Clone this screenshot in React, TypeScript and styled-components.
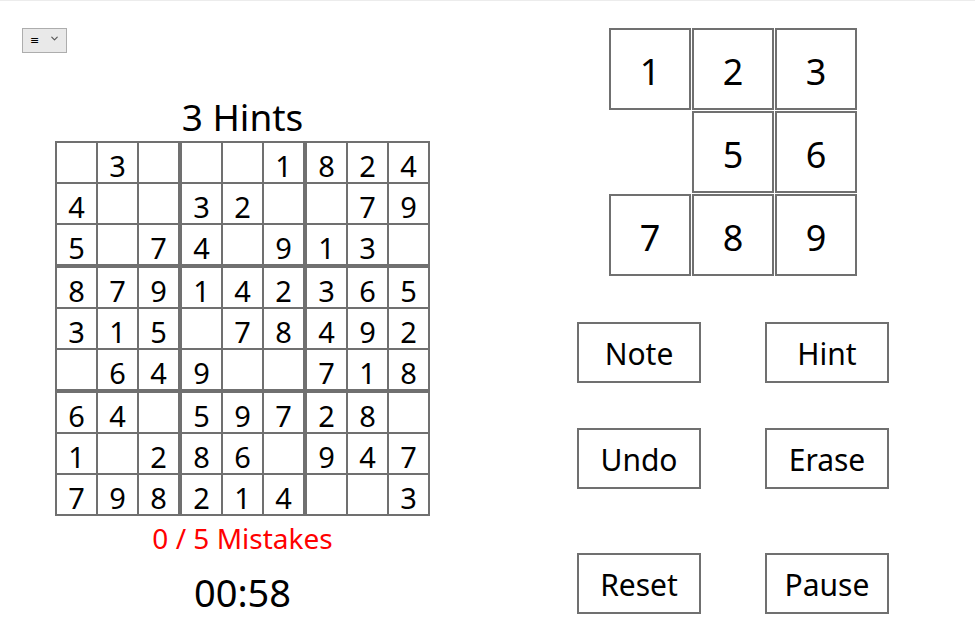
import React from "react";
import styled, { createGlobalStyle } from "styled-components";
import { ChevronDown } from "lucide-react";

const PUZZLE = [
    "_3___1824",
    "4__32__79",
    "5_74_913_",
    "879142365",
    "315_78492",
    "_649__718",
    "64_59728_",
    "1_286_947",
    "798214__3",
];

const KEYS = ["1", "2", "3", "", "5", "6", "7", "8", "9"];

const GlobalStyle = createGlobalStyle`
    html, body {
        margin: 0;
        padding: 0;
        background: #ffffff;
    }

    body {
        font-family: "Noto Sans", "Open Sans", sans-serif;
        color: #000000;
        border-top: 1px solid #ececec;
        overflow: hidden;
    }
`;

export default function App() {
    const cells = [];
    for (let r = 0; r < 9; r++) {
        for (let c = 0; c < 9; c++) {
            const value = PUZZLE[r][c];
            cells.push(
                <Cell
                    key={`${r}-${c}`}
                    $thickRight={c === 2 || c === 5}
                    $thickLeft={c === 3 || c === 6}
                    $thickBottom={r === 2 || r === 5}
                    $thickTop={r === 3 || r === 6}
                >
                    {value === "_" ? "" : value}
                </Cell>
            );
        }
    }

    return (
        <Page>
            <GlobalStyle />
            <LeftColumn>
                <Toolbar>
                    <MenuSelect>
                        <Select defaultValue="menu">
                            <option value="menu">≡</option>
                        </Select>
                        <Chevron size={11} strokeWidth={2.5} />
                    </MenuSelect>
                </Toolbar>
                <Title>3 Hints</Title>
                <Board>{cells}</Board>
                <Mistakes>0 / 5 Mistakes</Mistakes>
                <Timer>00:58</Timer>
            </LeftColumn>
            <RightColumn>
                <Keypad>
                    {KEYS.map((k, i) =>
                        k ? <Key key={i}>{k}</Key> : <KeySlot key={i} />
                    )}
                </Keypad>
                <Actions>
                    <ActionButton>Note</ActionButton>
                    <ActionButton>Hint</ActionButton>
                    <ActionButton>Undo</ActionButton>
                    <ActionButton>Erase</ActionButton>
                </Actions>
                <Actions $spaced>
                    <ActionButton>Reset</ActionButton>
                    <ActionButton>Pause</ActionButton>
                </Actions>
            </RightColumn>
        </Page>
    );
}

const Page = styled.div`
    display: flex;
    flex-direction: row;
    width: 100%;
    height: 637px;
`;

const LeftColumn = styled.div`
    width: 485px;
    display: flex;
    flex-direction: column;
    align-items: center;
    padding-top: 26px;
`;

const Toolbar = styled.div`
    align-self: stretch;
    padding-left: 22px;
    height: 25px;
`;

const MenuSelect = styled.div`
    position: relative;
    width: 45px;
    height: 25px;
`;

const Select = styled.select`
    appearance: none;
    width: 45px;
    height: 25px;
    box-sizing: border-box;
    border: 1px solid #adadad;
    border-radius: 0;
    background: #e9e9e9;
    font-family: "DejaVu Sans", sans-serif;
    font-size: 11px;
    padding: 0 0 0 7px;
    color: #000000;
    outline: none;
`;

const Chevron = styled(ChevronDown)`
    position: absolute;
    right: 7px;
    top: 6px;
    color: #555555;
    pointer-events: none;
`;

const Title = styled.div`
    margin-top: 45px;
    font-size: 37px;
    line-height: 40px;
`;

const Board = styled.div`
    margin-top: 4px;
    display: grid;
    grid-template-columns: repeat(9, auto);
    border: 1px solid #707070;
`;

const Cell = styled.div<{
    $thickRight: boolean;
    $thickLeft: boolean;
    $thickTop: boolean;
    $thickBottom: boolean;
}>`
    width: 39px;
    height: 33px;
    padding-top: 6px;
    border: 1px solid #707070;
    border-right-width: ${(p) => (p.$thickRight ? 2 : 1)}px;
    border-left-width: ${(p) => (p.$thickLeft ? 2 : 1)}px;
    border-top-width: ${(p) => (p.$thickTop ? 2 : 1)}px;
    border-bottom-width: ${(p) => (p.$thickBottom ? 2 : 1)}px;
    font-size: 29px;
    line-height: 33px;
    text-align: center;
`;

const Mistakes = styled.div`
    margin-top: 6px;
    font-size: 28px;
    line-height: 32px;
    color: #ff0000;
`;

const Timer = styled.div`
    margin-top: 16px;
    font-size: 38px;
    line-height: 44px;
`;

const RightColumn = styled.div`
    flex: 1;
    display: flex;
    flex-direction: column;
    align-items: center;
    padding-top: 27px;
    padding-left: 6px;
`;

const Keypad = styled.div`
    display: grid;
    grid-template-columns: repeat(3, 82px);
    grid-auto-rows: 82px;
    gap: 1px;
`;

const Key = styled.div`
    box-sizing: border-box;
    border: 2px solid #707070;
    display: flex;
    align-items: center;
    justify-content: center;
    padding-top: 4px;
    font-size: 36px;
`;

const KeySlot = styled.div``;

const Actions = styled.div<{ $spaced?: boolean }>`
    margin-top: ${(p) => (p.$spaced ? 64 : 46)}px;
    display: grid;
    grid-template-columns: repeat(2, 124px);
    column-gap: 64px;
    row-gap: 45px;
`;

const ActionButton = styled.button`
    box-sizing: border-box;
    width: 124px;
    height: 61px;
    border: 2px solid #707070;
    border-radius: 0;
    background: #ffffff;
    padding: 3px 0 0 0;
    font-family: inherit;
    font-size: 30px;
    line-height: 54px;
    color: #000000;
`;
